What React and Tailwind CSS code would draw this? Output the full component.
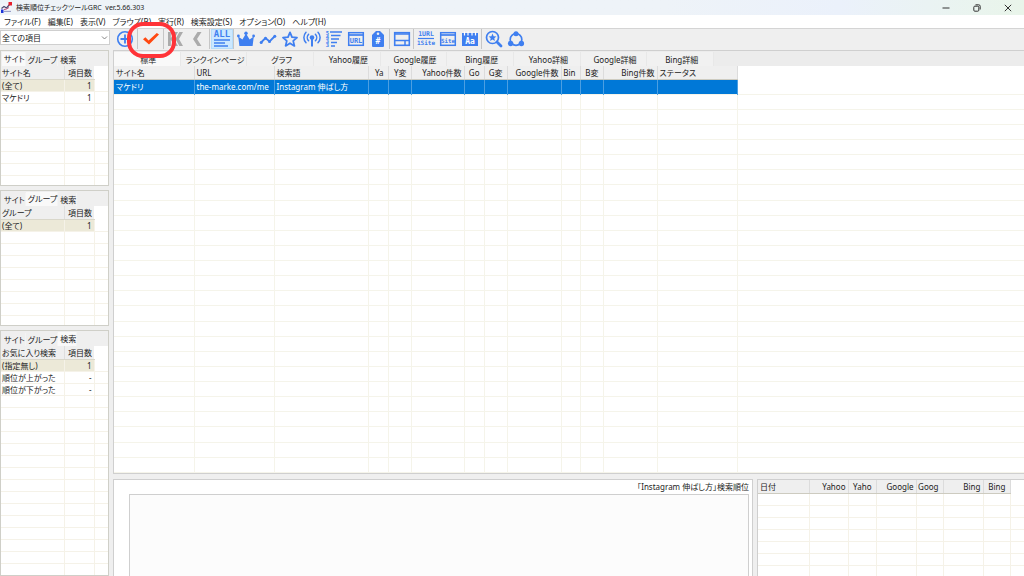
import React from 'react';
import clsx from 'clsx';

const BLUE = '#3f7ff0';

const menus = ['ファイル(F)', '編集(E)', '表示(V)', 'ブラウズ(B)', '実行(R)', '検索設定(S)', 'オプション(O)', 'ヘルプ(H)'];

const mainTabs = ['標準', 'ランクインページ', 'グラフ', 'Yahoo履歴', 'Google履歴', 'Bing履歴', 'Yahoo詳細', 'Google詳細', 'Bing詳細'];

const mainColumns = [
  { title: 'サイト名', width: 'w-[80px]', value: 'マケドリ' },
  { title: 'URL', width: 'w-[80px]', value: 'the-marke.com/me' },
  { title: '検索語', width: 'w-[94px]', value: 'Instagram 伸ばし方' },
  { title: 'Ya', width: 'w-[20px]', right: true, cut: true },
  { title: 'Y変', width: 'w-[23px]', right: true, cut: true },
  { title: 'Yahoo件数', width: 'w-[53px]', right: true },
  { title: 'Go', width: 'w-[20px]', right: true, cut: true },
  { title: 'G変', width: 'w-[23px]', right: true, cut: true },
  { title: 'Google件数', width: 'w-[54px]', right: true },
  { title: 'Bin', width: 'w-[19px]', right: true, cut: true },
  { title: 'B変', width: 'w-[23px]', right: true, cut: true },
  { title: 'Bing件数', width: 'w-[54px]', right: true },
  { title: 'ステータス', width: 'w-[80px]' },
];

const historyColumns = [
  { title: '日付', width: 'w-[51px]' },
  { title: 'Yahoo', width: 'w-[39px]', right: true },
  { title: 'Yaho', width: 'w-[28px]', right: true, cut: true },
  { title: 'Google', width: 'w-[40px]', right: true },
  { title: 'Goog', width: 'w-[27px]', right: true, cut: true },
  { title: 'Bing', width: 'w-[40px]', right: true },
  { title: 'Bing', width: 'w-[27px]', right: true, cut: true },
];

const Svg = ({ children }) => (
  <svg width="20" height="20" viewBox="0 0 20 20" fill="none" aria-hidden="true">{children}</svg>
);

const IconText = ({ x = 10, y, size, fill = BLUE, children }) => (
  <text x={x} y={y} fontSize={size} fill={fill} textAnchor="middle" fontWeight="700" fontFamily="DejaVu Sans Mono, monospace">{children}</text>
);

const AddIcon = () => (
  <Svg>
    <circle cx="10" cy="10" r="7.3" stroke={BLUE} strokeWidth="1.6" />
    <path d="M10 5.5v9M5.5 10h9" stroke={BLUE} strokeWidth="1.8" />
  </Svg>
);

const CheckIcon = () => (
  <Svg><path d="M2 10.2 4.4 8.3 7.6 11.4 15.8 4 18 5.6 8 15.6Z" fill="#ff4810" /></Svg>
);

const FirstIcon = () => (
  <Svg><path d="M2 3h2.8v14H2ZM8.4 3h3.6L8 10l4 7H8.4L4.4 10ZM13.4 3H17l-4 7 4 7h-3.6L9.4 10Z" fill="#ababab" /></Svg>
);

const PrevIcon = () => (
  <Svg><path d="M9.5 3h4L9 10l4.5 7h-4L5 10Z" fill="#ababab" /></Svg>
);

const AllIcon = () => (
  <Svg>
    <IconText y="8" size="9">ALL</IconText>
    <path d="M2 11h16M2 14h11M2 17h14" stroke={BLUE} strokeWidth="1.4" />
  </Svg>
);

const CrownIcon = () => (
  <Svg>
    <path d="M3.4 17 2.2 7.600 6.400 10.600 10 4.500l3.600 6.100 4.200-3L16.600 17Z" fill={BLUE} />
    <circle cx="2.400" cy="7" r="1.400" fill={BLUE} />
    <circle cx="10" cy="4.200" r="1.700" fill={BLUE} />
    <circle cx="17.600" cy="7" r="1.400" fill={BLUE} />
  </Svg>
);

const TrendIcon = () => (
  <Svg>
    <path d="M3 13.5 7.500 9l4 3.500L17 7" stroke={BLUE} strokeWidth="1.800" />
    <circle cx="3.200" cy="13.400" r="1.500" fill={BLUE} />
    <circle cx="7.500" cy="9.200" r="1.500" fill={BLUE} />
    <circle cx="11.500" cy="12.400" r="1.500" fill={BLUE} />
    <circle cx="16.800" cy="7.200" r="1.500" fill={BLUE} />
  </Svg>
);

const StarIcon = () => (
  <Svg><path d="m10 3.400 2 4.700 5 .5-3.800 3.300 1.200 5L10 14.200l-4.400 2.700 1.200-5L3 8.600l5-.5Z" stroke={BLUE} strokeWidth="1.800" strokeLinejoin="round" /></Svg>
);

const AntennaIcon = () => (
  <Svg>
    <circle cx="10" cy="8.500" r="2.300" fill={BLUE} />
    <path d="M10 9v8.500" stroke={BLUE} strokeWidth="2" />
    <path d="M6.600 5.200a4.800 4.800 0 0 0 0 6.600M13.400 5.200a4.800 4.800 0 0 1 0 6.600M4 3.200a7.700 7.700 0 0 0 0 10.600M16 3.200a7.700 7.700 0 0 1 0 10.600" stroke={BLUE} strokeWidth="1.500" strokeLinecap="round" />
  </Svg>
);

const RankIcon = () => (
  <Svg>
    <IconText x="3.500" y="5.800" size="5.500">5</IconText>
    <IconText x="3.500" y="9.800" size="5.500">4</IconText>
    <IconText x="3.500" y="13.800" size="5.500">3</IconText>
    <IconText x="3.500" y="17.800" size="5.500">3</IconText>
    <path d="M6 3h12M7 6.500h9.500M7 10h8M7 13.500h6M7 17h4" stroke={BLUE} strokeWidth="1.500" />
  </Svg>
);

const WindowIcon = ({ label }) => (
  <Svg>
    <rect x="2.700" y="3.700" width="14.600" height="12.600" stroke={BLUE} strokeWidth="1.500" />
    <path d="M2.500 6h15" stroke={BLUE} strokeWidth="1.700" />
    <IconText y="13.600" size={label.length > 3 ? 5.800 : 7}>{label}</IconText>
  </Svg>
);

const TagIcon = () => (
  <Svg>
    <path fillRule="evenodd" d="M8 2h4l4 4v11a1 1 0 0 1-1 1H5a1 1 0 0 1-1-1V6Zm2 1.500a1.300 1.300 0 1 0 0 2.600 1.300 1.300 0 0 0 0-2.600Z" fill={BLUE} />
    <IconText y="15" size="8" fill="#fff">#</IconText>
  </Svg>
);

const LayoutIcon = () => (
  <Svg>
    <rect x="2.700" y="3.700" width="14.600" height="12.600" stroke={BLUE} strokeWidth="1.600" />
    <path d="M2.500 5h15M2.500 11.500h15M13 11.500v5" stroke={BLUE} strokeWidth="1.500" />
  </Svg>
);

const UrlSiteIcon = () => (
  <Svg>
    <IconText y="7" size="6.500">1URL</IconText>
    <path d="M2 9.500h16" stroke={BLUE} strokeWidth="1.200" />
    <IconText y="16.200" size="6">1Site</IconText>
  </Svg>
);

const MemoIcon = () => (
  <Svg>
    <rect x="2" y="4" width="16" height="13" fill={BLUE} />
    <path d="M4.500 2.500v4M8 2.500v4M12 2.500v4M15.500 2.500v4" stroke="#fff" strokeWidth="1.200" />
    <IconText y="15" size="8" fill="#fff">Aa</IconText>
  </Svg>
);

const SearchStarIcon = () => (
  <Svg>
    <circle cx="8.500" cy="8.500" r="6" stroke={BLUE} strokeWidth="1.700" />
    <path d="m13 13 4 4" stroke={BLUE} strokeWidth="2.800" strokeLinecap="round" />
    <path d="m8.500 4.600 1.100 2.600 2.800.2-2.100 1.900.6 2.800-2.400-1.500-2.400 1.500.6-2.800-2.100-1.900 2.800-.2Z" fill={BLUE} />
  </Svg>
);

const ShareIcon = () => (
  <Svg>
    <circle cx="10" cy="10.500" r="5.800" stroke={BLUE} strokeWidth="1.700" />
    <circle cx="10" cy="4.800" r="2.500" fill={BLUE} />
    <circle cx="4.600" cy="14.500" r="2.700" fill={BLUE} />
    <circle cx="15.400" cy="14.500" r="2.700" fill={BLUE} />
  </Svg>
);

const ToolButton = ({ label, wide, active, children }) => (
  <button
    type="button"
    aria-label={label}
    aria-pressed={active}
    className={clsx('flex h-5 shrink-0 items-center justify-center', wide ? 'w-6' : 'w-[22px]', active && 'bg-[#cce8ff] outline outline-1 -outline-offset-1 outline-[#b5dcfa]')}
  >
    {children}
  </button>
);

const Divider = () => <div className="h-5 w-[2px] shrink-0 border-l border-[#c6c6c6]" />;

const Tabs = ({ items, active }) => (
  <div role="tablist" className="flex h-[15px] shrink-0 items-end bg-[#efefef] pl-px">
    {items.map((t) => (
      <button
        key={t}
        type="button"
        role="tab"
        aria-selected={t === active}
        className={clsx('border-r border-[#f4f4f4] pl-[2px]', t === active ? 'h-[14px] bg-[#f9f9f9] pb-px' : 'h-[13px]')}
      >
        {t}
      </button>
    ))}
  </div>
);

// 左側の一覧(サイト・グループ・検索)
const SidePanel = ({ active, title, rows, blank, className }) => (
  <section className={clsx('flex flex-col overflow-hidden border border-[#cfcfc8] bg-white', className)}>
    <Tabs items={['サイト', 'グループ', '検索']} active={active} />
    <table className="w-full table-fixed border-collapse">
      <thead>
        <tr className="h-[13px]">
          <th className="bg-[#efefef] border-b border-r border-b-[#d9d7ca] border-r-[#dedede] p-0 pl-px text-left font-normal whitespace-nowrap">{title}</th>
          <th className="w-[30px] border-b border-b-[#d9d7ca] bg-[#efefef] p-0 pr-[2px] text-right font-normal">項目数</th>
          <td className="w-[14px] p-0" />
        </tr>
      </thead>
      <tbody>
        {rows.map(([name, count], i) => (
          <tr key={name} className="h-3 border-b border-[#f5f2e8]">
            <td className={clsx('border-r border-[#f5f2e8] p-0 pl-px whitespace-nowrap', i === 0 && 'bg-[#ece9d8]')}>{name}</td>
            <td className={clsx('border-r border-[#f5f2e8] p-0 pr-[2px] text-right', i === 0 && 'bg-[#ece9d8]')}>{count}</td>
            <td className="p-0" />
          </tr>
        ))}
        {Array.from({ length: blank }, (_, i) => (
          <tr key={i} className="h-3 border-b border-[#f5f2e8]">
            <td className="border-r border-[#f5f2e8] p-0" />
            <td className="border-r border-[#f5f2e8] p-0" />
            <td className="p-0" />
          </tr>
        ))}
      </tbody>
    </table>
  </section>
);

const HeadCell = ({ col }) => (
  <th className={clsx('overflow-hidden border-b border-r border-b-[#cdcbc0] border-r-[#dcdcdc] bg-[#efefef] p-0 font-normal whitespace-nowrap', col.width, col.right ? 'text-right' : 'pl-[2px] text-left', col.cut ? 'pr-1' : 'pr-[2px]')}>
    {col.title}
  </th>
);

const TitleBar = () => (
  <header className="flex h-[15px] shrink-0 items-center bg-linear-to-r from-[#eef3f8] from-65% via-[#ebf1fb] via-82% to-[#e9f5ea] pl-px">
    <svg width="11" height="11" viewBox="0 0 11 11" aria-hidden="true">
      <rect x="0" y="2" width="10" height="8" fill="#f4f4fa" />
      <path d="M0 7.500h2.500V11H0Z" fill="#1c35d8" />
      <path d="M3 10h7V8.800H3Z" fill="#9aa0c8" />
      <path d="M.5 6.500 3 4.500l2.500 1.500L9 2" stroke="#4a4a70" strokeWidth="1.200" fill="none" />
      <path d="M7.500 0H11v3.500H7.500Z" fill="#e6202c" />
      <path d="M3 7.500 5.500 7 8 5.500" stroke="#c04a70" strokeWidth="1" fill="none" />
    </svg>
    <h1 className="ml-1 text-[7px] font-normal whitespace-nowrap">検索順位チェックツールGRC&nbsp; ver.5.66.303</h1>
    <div className="ml-auto flex">
      <button type="button" aria-label="最小化" className="flex h-[15px] w-8 items-center justify-center">
        <svg width="8" height="8" viewBox="0 0 8 8"><path d="M.5 4h7" stroke="#333" strokeWidth="1" /></svg>
      </button>
      <button type="button" aria-label="元に戻す" className="flex h-[15px] w-[30px] items-center justify-center">
        <svg width="8" height="8" viewBox="0 0 8 8" fill="none" stroke="#333" strokeWidth="1">
          <rect x=".8" y="2.200" width="5" height="5" rx="1" />
          <path d="M2.500.8h3.200A1.500 1.500 0 0 1 7.200 2.300v3.200" />
        </svg>
      </button>
      <button type="button" aria-label="閉じる" className="flex h-[15px] w-8 items-center justify-center">
        <svg width="8" height="8" viewBox="0 0 8 8"><path d="m.8.8 6.400 6.400M7.200.8.8 7.200" stroke="#333" strokeWidth="1" /></svg>
      </button>
    </div>
  </header>
);

const Toolbar = () => (
  <div className="relative flex h-[21px] shrink-0 items-start">
    <div className="relative mt-px mr-[3px] flex w-[110px] shrink-0">
      <select aria-label="表示する項目" className="h-[15px] w-full appearance-none border border-[#cfcfcf] bg-white pl-px">
        <option>全ての項目</option>
      </select>
      <svg className="pointer-events-none absolute top-[5px] right-[2px]" width="7" height="6" viewBox="0 0 7 6" fill="none">
        <path d="m1 1.500 2.500 2.500L6 1.500" stroke="#777" strokeWidth=".9" />
      </svg>
    </div>
    <ToolButton label="追加" wide><AddIcon /></ToolButton>
    <Divider />
    <ToolButton label="順位チェック" wide><CheckIcon /></ToolButton>
    <Divider />
    <ToolButton label="最初へ"><FirstIcon /></ToolButton>
    <ToolButton label="前へ"><PrevIcon /></ToolButton>
    <Divider />
    <ToolButton label="全て" active><AllIcon /></ToolButton>
    <Divider />
    <ToolButton label="上位"><CrownIcon /></ToolButton>
    <ToolButton label="変動"><TrendIcon /></ToolButton>
    <ToolButton label="お気に入り"><StarIcon /></ToolButton>
    <ToolButton label="電波"><AntennaIcon /></ToolButton>
    <ToolButton label="順位順"><RankIcon /></ToolButton>
    <ToolButton label="URL"><WindowIcon label="URL" /></ToolButton>
    <ToolButton label="タグ"><TagIcon /></ToolButton>
    <Divider />
    <ToolButton label="レイアウト"><LayoutIcon /></ToolButton>
    <Divider />
    <ToolButton label="1URL/1Site"><UrlSiteIcon /></ToolButton>
    <ToolButton label="Site"><WindowIcon label="Site" /></ToolButton>
    <ToolButton label="メモ"><MemoIcon /></ToolButton>
    <Divider />
    <ToolButton label="検索"><SearchStarIcon /></ToolButton>
    <ToolButton label="共有"><ShareIcon /></ToolButton>
    {/* チェックボタンの強調枠 */}
    <div className="pointer-events-none absolute -top-[7px] left-[127px] z-10 h-[36px] w-[49px] rounded-[16px] border-4 border-[#ff3338]" />
  </div>
);

const RankTable = () => (
  <section className="flex min-h-0 flex-1 flex-col overflow-hidden border-t border-b border-l border-[#cfcfcf] bg-white">
    <div className="flex h-[15px] shrink-0 items-end bg-[#ececec]">
      <div role="tablist" className="flex w-[600px]">
        {mainTabs.map((t, i) => (
          <button key={t} type="button" role="tab" aria-selected={i === 0} className={clsx('h-[14px] flex-1 basis-0 border-r border-[#e8e8e8] pt-px pl-[3px] whitespace-nowrap', i === 0 ? 'bg-[#f9f9f9]' : 'bg-[#f1f1f1]')}>
            {t}
          </button>
        ))}
      </div>
    </div>
    <div className="min-h-0 flex-1 overflow-hidden">
      <table className="h-full w-full table-fixed border-collapse">
        <thead>
          <tr className="h-[13px]">
            {mainColumns.map((c) => <HeadCell key={c.title} col={c} />)}
            <td className="p-0" />
          </tr>
        </thead>
        <tbody>
          <tr className="h-[15px] border-b border-[#f5f4ea] text-white">
            {mainColumns.map((c) => (
              <td key={c.title} className="overflow-hidden border-r border-[#4c9fe2] bg-[#0078d7] p-0 pl-[2px] whitespace-nowrap">{c.value}</td>
            ))}
            <td className="p-0" />
          </tr>
          {Array.from({ length: 25 }, (_, i) => (
            <tr key={i} className="h-[15px] border-b border-[#f5f4ea]">
              {mainColumns.map((c) => <td key={c.title} className="border-r border-[#f5f4ea] p-0" />)}
              <td className="p-0" />
            </tr>
          ))}
        </tbody>
      </table>
    </div>
  </section>
);

const HistoryTable = () => (
  <section className="w-[267px] shrink-0 overflow-hidden border-t border-l border-[#cfcfcf] bg-white">
    <table className="w-full table-fixed border-collapse">
      <thead>
        <tr className="h-[13px]">
          {historyColumns.map((c, i) => <HeadCell key={i} col={c} />)}
          <td className="p-0" />
        </tr>
      </thead>
      <tbody>
        {Array.from({ length: 8 }, (_, i) => (
          <tr key={i} className="h-3 border-b border-[#f5f2e8]">
            {historyColumns.map((c, j) => <td key={j} className="border-r border-[#f5f2e8] p-0" />)}
            <td className="p-0" />
          </tr>
        ))}
      </tbody>
    </table>
  </section>
);

const App = () => (
  <div lang="ja" className="flex h-screen flex-col overflow-hidden bg-[#efefef] font-['Noto_Sans','Noto_Sans_CJK_JP',sans-serif] text-[8px] leading-[11px] text-[#222] [font-feature-settings:'palt']">
    <TitleBar />
    <nav className="flex h-[14px] shrink-0 items-center gap-[7px] border-b border-[#d4d4d4] bg-white pl-1">
      {menus.map((m) => <button key={m} type="button" className="whitespace-nowrap">{m}</button>)}
    </nav>
    <Toolbar />
    <div className="flex min-h-0 flex-1 gap-1">
      <aside className="flex w-[109px] shrink-0 flex-col gap-1">
        <SidePanel className="h-[136px] shrink-0" active="サイト" title="サイト名" rows={[['(全て)', '1'], ['マケドリ', '1']]} blank={7} />
        <SidePanel className="h-[136px] shrink-0" active="グループ" title="グループ" rows={[['(全て)', '1']]} blank={8} />
        <SidePanel className="min-h-0 flex-1" active="検索" title="お気に入り検索" rows={[['(指定無し)', '1'], ['順位が上がった', '-'], ['順位が下がった', '-']]} blank={16} />
      </aside>
      <main className="flex min-w-0 flex-1 flex-col gap-[5px]">
        <RankTable />
        <div className="flex h-[97px] shrink-0 gap-1">
          <section className="flex min-w-0 flex-1 flex-col border border-b-0 border-[#cfcfcf] bg-white pr-[3px] pl-[15px]">
            <h2 className="h-[14px] pt-px text-right font-normal">「Instagram 伸ばし方」検索順位</h2>
            <div className="flex-1 border border-b-0 border-[#cfcfcf] bg-[#fcfcfc]" />
          </section>
          <HistoryTable />
        </div>
      </main>
    </div>
  </div>
);

export default App;
